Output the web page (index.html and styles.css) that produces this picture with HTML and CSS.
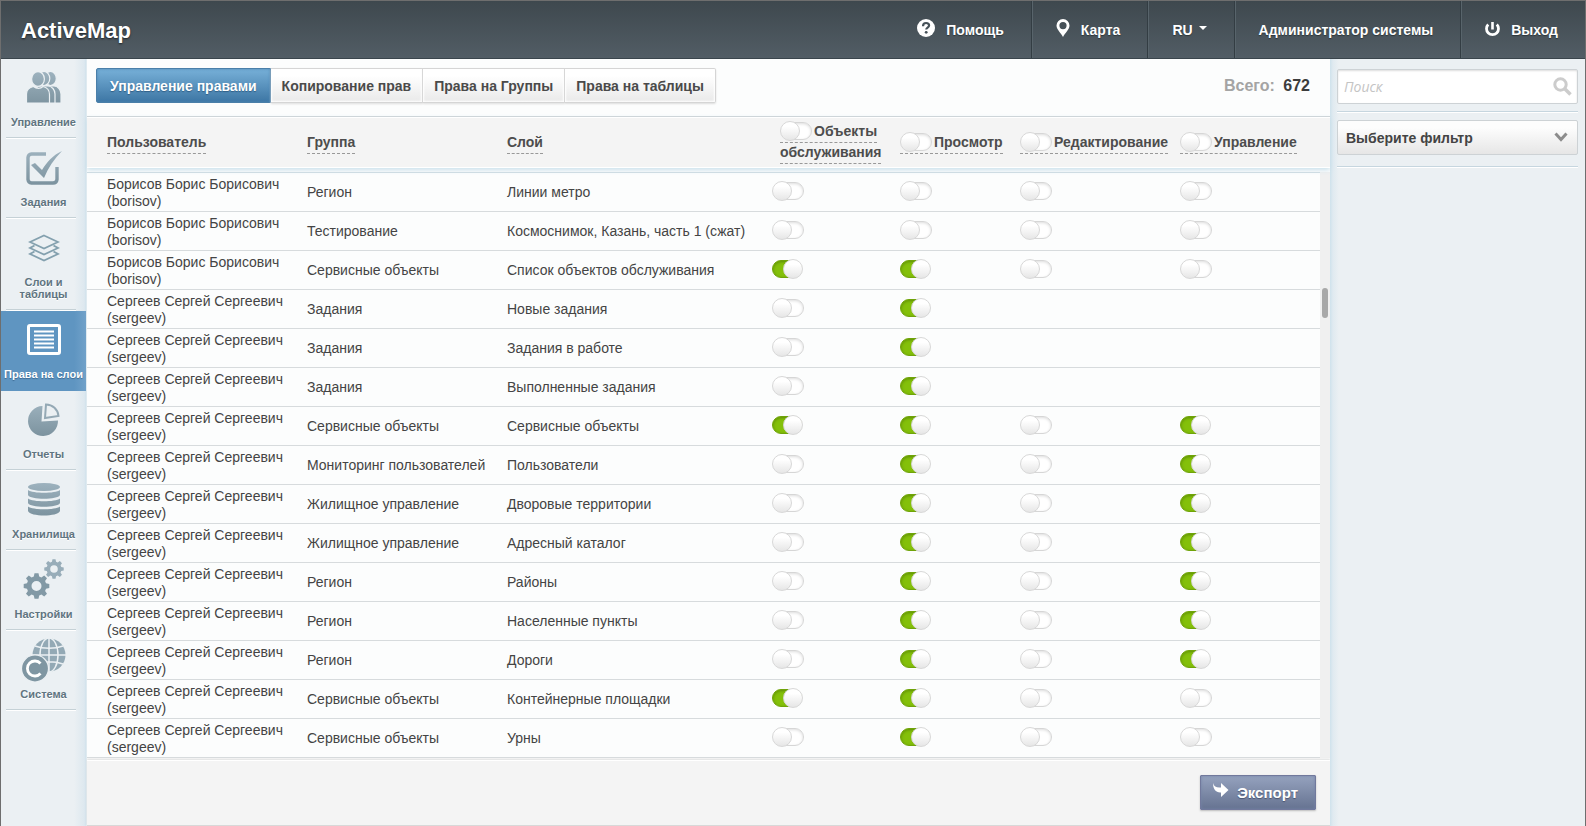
FILE: index.html
```html
<!DOCTYPE html>
<html lang="ru">
<head>
<meta charset="utf-8">
<title>ActiveMap</title>
<link rel="stylesheet" href="styles.css">
</head>
<body>
<div class="app">
  <svg class="defs" width="0" height="0" aria-hidden="true">
    <defs>
      <linearGradient id="steel" gradientUnits="userSpaceOnUse" x1="0" y1="0" x2="0" y2="34"><stop offset="0" stop-color="#9db2be"/><stop offset="1" stop-color="#7b929e"/></linearGradient>
      <path id="gear" d="M-2-12.8h4l.7 3.3 2.2.9L7.700-10.500l2.800 2.800L8.600-4.900l.9 2.200 3.300.7v4l-3.300.7-.9 2.200 1.900 2.800-2.800 2.800-2.800-1.900-2.200.9-.7 3.300h-4l-.7-3.300-2.200-.9-2.800 1.900-2.800-2.800 1.900-2.800-.9-2.200-3.300-.7v-4l3.300-.7.9-2.200-1.900-2.800 2.800-2.800 2.800 1.900 2.200-.9zM0-5a5 5 0 1 0 0 10A5 5 0 0 0 0-5z"/>
    </defs>
  </svg>
  <header class="topbar">
    <div class="brand">ActiveMap</div>
    <nav class="topnav">
      <a href="#"><svg class="up" width="18" height="18" viewBox="0 0 18 18"><circle cx="9" cy="9" r="9" fill="#fff"/><path d="M6 7.200C6 5 7.300 4 9.100 4s3 1 3 2.600c0 2-2.900 2.100-2.900 4" fill="none" stroke="#465158" stroke-width="2.200"/><circle cx="9.200" cy="13.300" r="1.400" fill="#465158"/></svg>Помощь</a>
      <a href="#"><svg class="up" width="14" height="18" viewBox="0 0 14 18"><path fill="#fff" fill-rule="evenodd" d="M7 0a6.500 6.500 0 0 1 6.500 6.500C13.500 10.500 9 14 7 18 5 14 .5 10.500.5 6.500A6.500 6.500 0 0 1 7 0zm0 3a3.600 3.600 0 1 0 0 7.200A3.600 3.600 0 0 0 7 3z"/></svg>Карта</a>
      <a href="#" class="lang">RU<svg class="up" width="8" height="4" viewBox="0 0 8 4"><path d="M0 0h8L4 4z" fill="#fff"/></svg></a>
      <a href="#">Администратор системы</a>
      <a href="#"><svg width="15" height="15" viewBox="0 0 15 15"><path d="M3.200 2.500A6 6 0 1 0 11.800 2.500" fill="none" stroke="#fff" stroke-width="2.800"/><path d="M7.500 0v7.500" stroke="#fff" stroke-width="2.600"/></svg>Выход</a>
    </nav>
  </header>
  <div class="body">
    <nav class="sidebar">
      <a href="#"><span class="ico"><svg width="36" height="31" viewBox="0 0 36 31"><g fill="url(#steel)" stroke="#ebf0f3" stroke-width="1.200"><ellipse cx="24.500" cy="6.500" rx="5.800" ry="7"/><path d="M14 31V21c0-4 3-7 7-7h7c4 0 7 4 7 8v9z"/><ellipse cx="18" cy="6.500" rx="5.800" ry="7"/><path d="M8 31V21c0-4 3-7 7-7h7c4 0 7 4 7 8v9z"/><ellipse cx="12" cy="7" rx="6.400" ry="7.400"/><path d="M.5 31v-9c0-4 3-6.500 7-7.500 3 2.500 7 2.500 9.500 0 4 1 6.500 4 6.500 8V31z"/></g></svg></span><span class="cap">Управление</span></a>
      <a href="#"><span class="ico"><svg width="36" height="34" viewBox="0 0 36 34"><path d="M20 3H5.500A4 4 0 0 0 2 6.500v22A4 4 0 0 0 5.500 32H27a4 4 0 0 0 4-3.500V16" fill="none" stroke="url(#steel)" stroke-width="3.400"/><path d="M5 14l4-2 7 7C21 11 27 4 36 0 28 8 22 17 18 27z" fill="url(#steel)"/></svg></span><span class="cap">Задания</span></a>
      <a href="#"><span class="ico"><svg width="32" height="28" viewBox="0 0 32 28"><g fill="none" stroke="#83a0ae" stroke-width="1.800"><path d="M16 1.500L30 8l-14 6.500L2 8z"/><path d="M6.500 11.500L2 14l14 6.500L30 14l-4.500-2.500"/><path d="M6.500 17.500L2 20l14 6.500L30 20l-4.500-2.500"/></g></svg></span><span class="cap">Слои и<br>таблицы</span></a>
      <a href="#" class="active"><span class="ico"><svg width="34" height="31" viewBox="0 0 34 31"><rect x="1.500" y="1.500" width="31" height="28" rx="1.500" fill="none" stroke="#fff" stroke-width="3"/><path d="M7 7.500h20M7 11.500h20M7 15.500h20M7 19.500h20M7 23.500h20" stroke="#fff" stroke-width="2"/></svg></span><span class="cap">Права на слои</span></a>
      <a href="#"><span class="ico"><svg width="34" height="34" viewBox="0 0 34 34"><path d="M15.500 3A15 15 0 1 0 31 17.500L14.500 18.500z" fill="url(#steel)"/><path d="M19 1.500c6.500 0 12 5 12.500 11.500L18 15z" fill="none" stroke="#94a9b5" stroke-width="2"/></svg></span><span class="cap">Отчеты</span></a>
      <a href="#"><span class="ico"><svg width="32" height="33" viewBox="0 0 32 33"><g fill="url(#steel)"><ellipse cx="16" cy="4" rx="16" ry="4"/><path d="M0 7c5 3.700 27 3.700 32 0v5c-2 5-30 5-32 0zM0 15.500c5 3.700 27 3.700 32 0v4.500c-2 5-30 5-32 0zM0 23.500c5 3.700 27 3.700 32 0V28c-2 6-30 6-32 0z"/></g></svg></span><span class="cap">Хранилища</span></a>
      <a href="#"><span class="ico"><svg width="41" height="41" viewBox="0 0 41 41"><g fill-rule="evenodd"><use href="#gear" transform="translate(13.500 27)" fill="#8299a5"/><use href="#gear" transform="translate(31 10) scale(.76)" fill="#98adb9"/></g></svg></span><span class="cap">Настройки</span></a>
      <a href="#"><span class="ico"><svg width="44" height="44" viewBox="0 0 44 44"><circle cx="27" cy="17" r="16.500" fill="#93a9b5"/><g fill="none" stroke="#ebf0f3" stroke-width="1.500"><path d="M27 0v34M10 17h34M13 8c8 3 20 3 28 0M13 26c8-3 20-3 28 0"/><ellipse cx="27" cy="17" rx="9" ry="17"/></g><circle cx="13" cy="30.500" r="13.500" fill="#7f96a2" stroke="#ebf0f3" stroke-width="1.200"/><path d="M18.500 25.500a7.500 7.500 0 1 0 0 10" fill="none" stroke="#fff" stroke-width="2.800"/></svg></span><span class="cap">Система</span></a>
    </nav>
    <main class="content">
      <div class="toolbar">
        <div class="tabs">
          <button type="button" class="on">Управление правами</button><button type="button">Копирование прав</button><button type="button">Права на Группы</button><button type="button">Права на таблицы</button>
        </div>
        <div class="total">Всего: <b>672</b></div>
      </div>
      <table class="grid head">
        <colgroup><col class="c-user"><col class="c-group"><col><col class="c-obj"><col class="c-view"><col class="c-edit"><col class="c-edit"><col class="c-bar"></colgroup>
        <thead><tr>
          <th scope="col"><span class="sort">Пользователь</span></th>
          <th scope="col"><span class="sort">Группа</span></th>
          <th scope="col"><span class="sort">Слой</span></th>
          <th scope="col" class="two"><label class="sort"><input type="checkbox" class="tgl">Объекты<br>обслуживания</label></th>
          <th scope="col"><label class="sort"><input type="checkbox" class="tgl">Просмотр</label></th>
          <th scope="col"><label class="sort"><input type="checkbox" class="tgl">Редактирование</label></th>
          <th scope="col"><label class="sort"><input type="checkbox" class="tgl">Управление</label></th>
          <th></th>
        </tr></thead>
      </table>
      <div class="scroller">
        <table class="grid rows">
          <colgroup><col class="c-user"><col class="c-group"><col><col class="c-obj"><col class="c-view"><col class="c-edit"><col class="c-edit"></colgroup>
          <tbody id="rows"></tbody>
        </table>
        <div class="track"><div class="thumb"></div></div>
      </div>
      <footer class="footer">
        <button type="button" class="export"><svg width="16" height="15" viewBox="0 0 16 15"><path d="M0 0c1 4 4 5 8 4.500V0l7.500 7L8 14v-4.500C3 10 0 6 0 0z" fill="#fff"/></svg>Экспорт</button>
      </footer>
    </main>
    <aside class="filters">
      <div class="search"><input type="search" placeholder="Поиск" aria-label="Поиск"><svg width="19" height="19" viewBox="0 0 19 19"><circle cx="7.500" cy="7.500" r="5.700" fill="none" stroke="#ccc" stroke-width="3"/><path d="M11.500 11.500l6 6" stroke="#ccc" stroke-width="3.600"/></svg></div>
      <div class="pick"><select aria-label="Фильтр"><option>Выберите фильтр</option></select><svg width="14" height="10" viewBox="0 0 14 10"><path d="M1.500 1.500L7 7.500l5.500-6" fill="none" stroke="#8c8c8c" stroke-width="3"/></svg></div>
    </aside>
  </div>
</div>
<script src="rows.js"></script>
</body>
</html>
```
FILE: styles.css
```css
*, *::before, *::after { box-sizing: border-box; }
body { margin: 0; font-family: "Liberation Sans", Arial, sans-serif; font-size: 14px; color: #444; }
button, input, select { font: inherit; color: inherit; }
a { color: inherit; text-decoration: none; }
.defs { position: absolute; }
.app { min-height: 100vh; display: flex; flex-direction: column; border: 1px solid #6e6e6e; }

.topbar { display: flex; justify-content: space-between; height: 58px; background: linear-gradient(#3e484e, #525d65); border-bottom: 1px solid #3a454c; color: #fff; font-weight: bold; }
.brand { padding-left: 20px; font-size: 22px; line-height: 60px; text-shadow: 0 1px 2px #1c2226; }
.topnav { display: flex; }
.topnav a { display: flex; align-items: center; gap: 11px; padding: 0 27px 0 24px; border-left: 1px solid #333d43; box-shadow: inset 1px 0 #58646b; text-shadow: 0 1px 1px #2c353a; }
.topnav a:first-child { border: 0; box-shadow: none; }
.topnav .up { margin-bottom: 3px; }
.topnav .lang { gap: 6px; }

.body { flex: 1; display: flex; }
.sidebar { width: 86px; flex: none; background: linear-gradient(to right, #ebf0f3 86%, #dde8ef 98%, #d0e2ec); border-right: 1px solid #dfeaf0; color: #5f7480; }
.sidebar a { display: flex; flex-direction: column; align-items: center; padding-bottom: 11px; background: linear-gradient(#c5d1d6, #c5d1d6) 5px calc(100% - 1px) / 70px 1px no-repeat, linear-gradient(#fff, #fff) 5px 100% / 70px 1px no-repeat; }
.ico { height: 57px; display: flex; align-items: center; justify-content: center; }
.cap { font-size: 11px; line-height: 12px; font-weight: bold; text-align: center; text-shadow: 0 1px #fff; white-space: nowrap; }
.sidebar .active { background: linear-gradient(to right, #5f95c1 86%, #70a1c9); color: #fff; }
.active .cap { text-shadow: 0 1px 1px #3d6a92; }

.content { flex: 1; min-width: 0; display: flex; flex-direction: column; background: #fcfdfd; }
.toolbar { display: flex; justify-content: space-between; align-items: flex-start; padding: 9px 20px 13px 9px; border-bottom: 1px solid #cfd3d5; }
.tabs { display: flex; }
.tabs button { height: 35px; padding: 0 11px; border: 1px solid #d5d5d5; border-left-width: 0; background: linear-gradient(#fff 20%, #e9e9e9); box-shadow: 0 1px 2px #ddd, inset 0 0 2px 1px #fff; font-weight: bold; color: #4a4a4a; }
.tabs button:last-child { border-radius: 0 2px 2px 0; }
.tabs .on { padding: 0 13px; border: 1px solid #4a7fa9; border-radius: 2px 0 0 2px; background: linear-gradient(#77b0d8, #3d76a4); box-shadow: inset 0 0 3px #4c86b4; color: #fff; text-shadow: 0 1px 1px #2f5e85; }
.total { font-size: 16px; font-weight: bold; line-height: 35px; color: #a4a4a4; }
.total b { color: #3c3c3c; margin-left: 4px; }

.grid { width: 100%; table-layout: fixed; border-collapse: separate; border-spacing: 0; }
.c-user, .c-group { width: 200px; }
.c-obj { width: 128px; }
.c-view { width: 120px; }
.c-edit { width: 160px; }
.c-bar { width: 10px; }
.grid th, .grid td { padding: 0 0 0 20px; text-align: left; vertical-align: middle; }
.head { position: relative; background: #f4f4f4; border-top: 1px solid #fff; border-bottom: 1px solid #fff; box-shadow: 0 2px 5px #c9dfea; }
.grid.head th { height: 49px; padding-bottom: 1px; color: #4d4d4d; white-space: nowrap; line-height: 21px; }
.grid.head .two { padding-left: 28px; }
.grid.head th:last-child { padding: 0; }
.sort { border-bottom: 1px dashed #999; padding-bottom: 3px; }
.tgl { appearance: none; position: relative; display: inline-block; width: 32px; height: 20px; margin: 0 2px 0 0; vertical-align: -5px; }
.tgl::before { content: ""; position: absolute; inset: 1px 0 1px 1px; border: 1px solid #d6d6d6; border-radius: 9px; background: #fff; box-shadow: inset 0 1px 3px #ddd; }
.tgl::after { content: ""; position: absolute; left: 0; top: 0; width: 20px; height: 20px; border: 1px solid #d8d8d8; border-radius: 50%; background: linear-gradient(#fff 25%, #e6e6e6); }
.tgl:checked::before { inset: 1px 2px 1px 0; border-color: #6fa309; background: #84c00a; box-shadow: inset 0 1px 3px #5e8c06; }
.tgl:checked::after { left: 11px; }

.scroller { display: flex; align-items: stretch; padding-top: 4px; }
.rows { flex: 1; border-top: 1px solid #cfdbe1; }
.rows td { height: 39px; border-bottom: 1px solid #d7dbdd; line-height: 17px; color: #444; }
.grid.rows td:first-child { padding-top: 2px; }
.rows .tgl { display: block; margin-bottom: 2px; }
.track { width: 10px; flex: none; padding: 116px 2px 0; background: #f0f0f0; }
.thumb { height: 30px; border-radius: 3px; background: #a8a8a8; }

.footer { flex: 1; display: flex; justify-content: flex-end; align-items: flex-start; margin-top: 2px; padding: 14px 14px 15px; background: #f4f4f4; border-top: 1px solid #fff; border-bottom: 1px solid #d8d8d8; box-shadow: 0 -1px 2px #ddd; }
.export { display: flex; align-items: center; gap: 8px; height: 35px; padding: 0 17px 0 12px; border: 1px solid #71799c; border-radius: 1px; background: linear-gradient(#95a2be, #667391); box-shadow: 0 1px 2px #bbb, inset 0 0 3px #7682a8; color: #fff; font-size: 15px; font-weight: bold; text-shadow: 0 1px 1px #4a5470; }
.export svg { margin-bottom: 4px; }

.filters { width: 255px; flex: none; background: linear-gradient(to right, #cfe2ec, #e0eaf0 3px, #ebf0f3 9px); padding: 10px 7px; display: flex; flex-direction: column; }
.search, .pick { position: relative; padding-bottom: 7px; margin-bottom: 8px; border-bottom: 1px solid #c6d6df; box-shadow: 0 1px #fff; }
.pick { padding-bottom: 11px; }
.search input, .pick select { appearance: none; display: block; width: 100%; height: 35px; border: 1px solid #cdd2d5; border-radius: 2px; outline: 0; }
.search input { padding: 0 34px 0 6px; background: #fff; box-shadow: inset 0 1px 2px #ddd; }
.search input::placeholder { font-family: "Open Sans", sans-serif; font-style: italic; font-size: 14px; color: #c4c4c4; opacity: 1; }
.pick select { padding: 0 34px 0 8px; background: linear-gradient(#fdfdfd 20%, #e6e6e6); font-weight: bold; color: #444; }
.search svg { position: absolute; right: 6px; top: 8px; }
.pick svg { position: absolute; right: 10px; top: 12px; pointer-events: none; }
```
FILE: rows.js
```js
// Switch flags: objects, view, edit, manage. 1 = on, 0 = off, "-" = not available.
const B = ["Борисов Борис Борисович", "borisov"];
const S = ["Сергеев Сергей Сергеевич", "sergeev"];
const data = [
  [B, "Регион", "Линии метро", "0000"],
  [B, "Тестирование", "Космоснимок, Казань, часть 1 (сжат)", "0000"],
  [B, "Сервисные объекты", "Список объектов обслуживания", "1100"],
  [S, "Задания", "Новые задания", "01--"],
  [S, "Задания", "Задания в работе", "01--"],
  [S, "Задания", "Выполненные задания", "01--"],
  [S, "Сервисные объекты", "Сервисные объекты", "1101"],
  [S, "Мониторинг пользователей", "Пользователи", "0101"],
  [S, "Жилищное управление", "Дворовые территории", "0101"],
  [S, "Жилищное управление", "Адресный каталог", "0101"],
  [S, "Регион", "Районы", "0101"],
  [S, "Регион", "Населенные пункты", "0101"],
  [S, "Регион", "Дороги", "0101"],
  [S, "Сервисные объекты", "Контейнерные площадки", "1100"],
  [S, "Сервисные объекты", "Урны", "0100"]
];
const names = ["Объекты обслуживания", "Просмотр", "Редактирование", "Управление"];
document.getElementById("rows").innerHTML = data.map(([u, g, l, f]) =>
  `<tr><td>${u[0]}<br>(${u[1]})</td><td>${g}</td><td>${l}</td>` +
  [...f].map((v, i) => v === "-" ? "<td></td>" :
    `<td><input type="checkbox" class="tgl" aria-label="${names[i]}: ${l}"${v === "1" ? " checked" : ""}></td>`).join("") +
  "</tr>").join("");
```
